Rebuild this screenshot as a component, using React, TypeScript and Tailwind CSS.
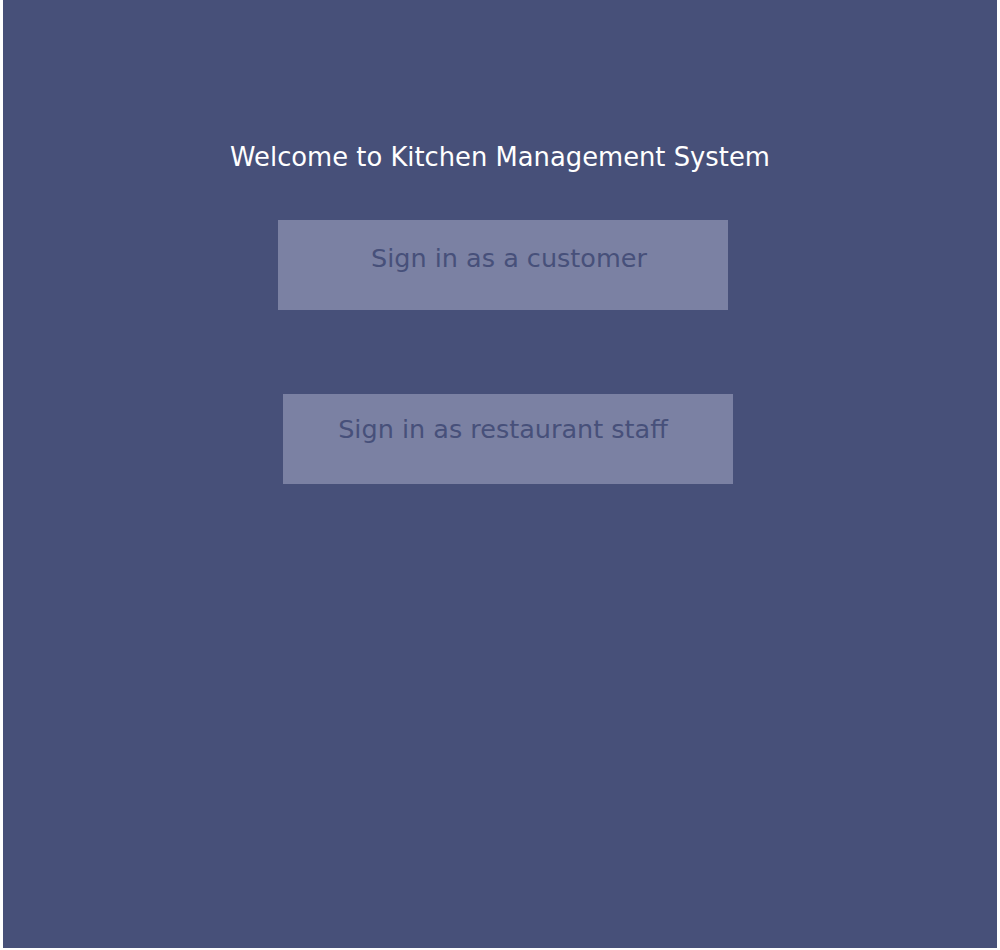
export default function App() {
  return (
    <div className="min-h-screen bg-white pl-[3px] pr-[3px] pb-[2px]" style={{ fontFamily: '"DejaVu Sans", Verdana, sans-serif' }}>
      <div className="h-[948px] bg-[#475079] flex flex-col">
        <h1 className="mt-[139px] h-[36px] text-center text-[25.8px] leading-[36px] text-white">
          Welcome to Kitchen Management System
        </h1>
        <button className="mt-[45px] ml-[275px] w-[450px] h-[90px] bg-[#7b81a3] text-[#47507a] text-[25.5px] leading-[30px] flex justify-center pt-[23px] pl-[12px]">
          Sign in as a customer
        </button>
        <button className="mt-[84px] ml-[280px] w-[450px] h-[90px] bg-[#7b81a3] text-[#47507a] text-[25.5px] leading-[30px] flex justify-center pt-[20px] pr-[10px]">
          Sign in as restaurant staff
        </button>
      </div>
    </div>
  );
}
